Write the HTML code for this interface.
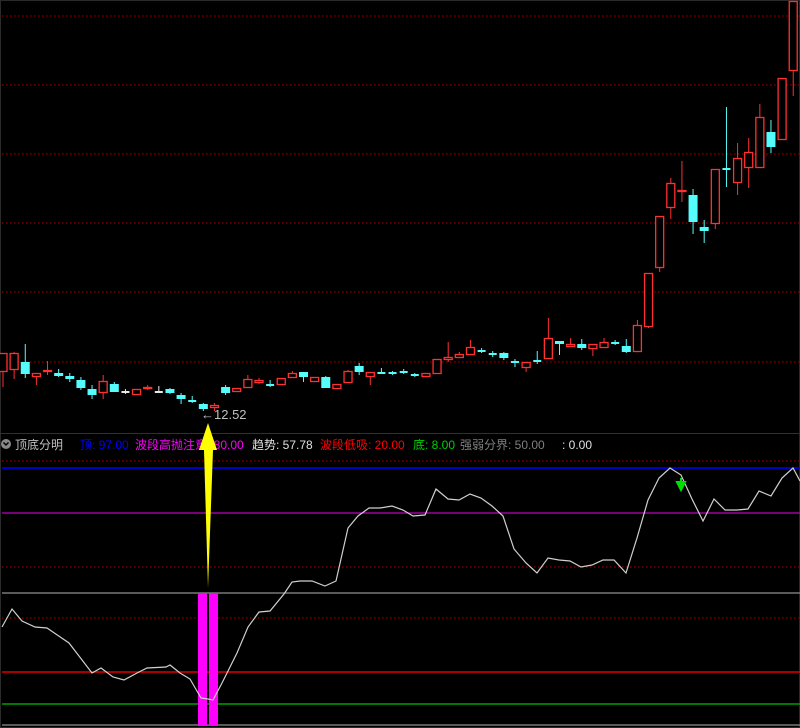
<!DOCTYPE html>
<html><head><meta charset="utf-8"><style>
html,body{margin:0;padding:0;background:#000;width:800px;height:728px;overflow:hidden}
svg{display:block}
text{font-family:"Liberation Sans","Noto Sans CJK SC",sans-serif;font-size:12px}
</style></head><body>
<svg id="s" width="800" height="728" xmlns="http://www.w3.org/2000/svg">
<rect width="800" height="728" fill="#000"/>
<rect x="0.5" y="0.5" width="799" height="727" fill="none" stroke="#2a2a2a"/>
<g stroke="#8a0000" stroke-width="1.2" stroke-dasharray="1.5 2.5">
<line x1="2" y1="16" x2="800" y2="16"/><line x1="2" y1="85" x2="800" y2="85"/><line x1="2" y1="154" x2="800" y2="154"/><line x1="2" y1="223" x2="800" y2="223"/><line x1="2" y1="292" x2="800" y2="292"/><line x1="2" y1="362" x2="800" y2="362"/>
<line x1="2" y1="461" x2="800" y2="461"/><line x1="2" y1="567" x2="800" y2="567"/><line x1="2" y1="618" x2="800" y2="618"/>
</g>
<line x1="0" y1="433.5" x2="800" y2="433.5" stroke="#a00000"/>
<g id="c"></g>
<text x="201" y="419" fill="#c0c0c0" style="font-size:13px">←12.52</text>
<g>
<circle cx="6" cy="444" r="5" fill="#888"/><path d="M3.5 442.5 L6 445 L8.5 442.5" stroke="#000" stroke-width="1.5" fill="none"/>
<text x="15" y="449" fill="#c0c0c0">顶底分明</text>
<text x="80" y="449" fill="#0000ff">顶: 97.00</text>
<text x="135" y="449" fill="#ff00ff">波段高抛注意: 80.00</text>
<text x="252" y="449" fill="#e0e0e0">趋势: 57.78</text>
<text x="320" y="449" fill="#ff0000">波段低吸: 20.00</text>
<text x="413" y="449" fill="#00d000">底: 8.00</text>
<text x="460" y="449" fill="#808080">强弱分界: 50.00</text>
<text x="562" y="449" fill="#e0e0e0">: 0.00</text>
</g>
<line x1="2" y1="468" x2="800" y2="468" stroke="#0000ff" stroke-width="1.5"/>
<line x1="2" y1="513" x2="800" y2="513" stroke="#c000c0" stroke-width="1.2"/>
<line x1="2" y1="593" x2="800" y2="593" stroke="#909090" stroke-width="1.2"/>
<line x1="2" y1="672" x2="800" y2="672" stroke="#e00000" stroke-width="1.5"/>
<line x1="2" y1="704" x2="800" y2="704" stroke="#00a000" stroke-width="1.5"/>
<line x1="2" y1="725" x2="800" y2="725" stroke="#909090" stroke-width="1.2"/>
<rect x="198" y="593" width="9" height="133" fill="#ff00ff"/>
<rect x="209" y="593" width="9" height="133" fill="#ff00ff"/>
<polyline fill="none" stroke="#d0d0d0" stroke-width="1.2" points="2,627 12,609 22,621 35,627 47,628 69,643 92,673 101,668 113,677 124,680 137,673 147,668 166,667 170,665 180,673 190,679 201,698 208,699 213,700 222,683 237,653 248,627 259,612 270,611 284,594 292,582 300,581 312,581 325,586 336,581 348,528 358,516 369,508 380,508 392,506 403,510 413,516 425,515 436,489 448,499 459,500 470,494 481,498 492,506 503,516 514,549 526,563 537,573 548,558 559,560 570,561 581,567 592,565 603,560 614,560 626,573 637,538 648,500 659,478 670,468 681,475 692,499 703,521 714,499 725,510 737,510 748,509 759,491 771,496 782,478 793,468 800,481"/>
<path d="M681 478 V486 M677 482 L681 490 L685 482 Z" stroke="#00e000" stroke-width="2" fill="#00e000"/>
<path d="M208 423 L217 450 L213 450 L208 588 L204 450 L199 450 Z" fill="#ffff00"/>
</svg>
<script>
var d=[[1,353,372,353,387],[1,353,370,352,379],[0,362,374,344,378],[1,373,377,373,385],[1,370,372,361,375],[0,373,376,369,377],[0,376,379,373,382],[0,380,388,377,390],[0,389,395,385,399],[1,381,393,375,399],[0,384,392,382,392],[2,392,392,389,394],[1,389,395,389,395],[1,387,389,385,390],[2,392,392,386,393],[0,389,393,388,394],[0,395,399,393,404],[0,401,401,396,403],[0,404,409,403,411],[1,405,408,403,411],[0,387,393,385,395],[1,388,392,388,392],[1,379,388,375,388],[1,380,383,378,384],[0,385,385,380,387],[1,378,385,378,385],[1,373,378,371,378],[0,372,377,372,382],[1,377,382,377,382],[0,377,388,376,388],[1,384,389,384,389],[1,371,383,370,383],[0,366,372,363,375],[1,372,377,372,385],[0,373,373,368,374],[0,373,373,371,375],[0,372,372,369,374],[0,375,376,373,377],[1,373,377,373,377],[1,359,374,359,374],[1,357,360,342,362],[1,354,358,352,358],[1,347,355,340,355],[0,351,351,348,353],[0,354,354,351,357],[0,353,358,352,360],[0,362,362,359,367],[1,362,368,362,372],[0,361,361,351,364],[1,338,359,318,359],[0,341,344,341,355],[1,344,347,338,347],[0,344,348,339,350],[1,344,349,344,356],[1,342,348,338,348],[0,343,343,340,345],[0,346,352,339,353],[1,325,352,320,352],[1,273,327,273,328],[1,216,268,216,272],[1,183,208,178,219],[1,190,192,161,202],[0,195,222,189,234],[0,227,231,220,243],[1,169,224,169,229],[0,169,169,107,187],[1,158,183,143,195],[1,152,168,138,188],[1,117,168,104,168],[0,132,147,120,153],[1,78,140,78,140],[1,1,71,1,96]];
var h='';for(var i=0;i<d.length;i++){var c=d[i],x=3+11.13*i,col=c[0]==1?'#ff3030':(c[0]==0?'#54fcfc':'#e8e8e8');
h+='<line x1="'+x+'" y1="'+c[3]+'" x2="'+x+'" y2="'+c[4]+'" stroke="'+col+'" stroke-width="1"/>';
var t=c[1],b=c[2];if(b-t<2){h+='<rect x="'+(x-4)+'" y="'+(t-1)+'" width="8" height="2" fill="'+col+'"/>';}
else if(c[0]==1){h+='<rect x="'+(x-4)+'" y="'+(t+0.5)+'" width="8" height="'+(b-t-1)+'" fill="#000" stroke="'+col+'" stroke-width="1.3"/>';}
else{h+='<rect x="'+(x-4.5)+'" y="'+t+'" width="9" height="'+(b-t)+'" fill="'+col+'"/>';}}
document.getElementById('c').innerHTML=h;
</script>
</body></html>
